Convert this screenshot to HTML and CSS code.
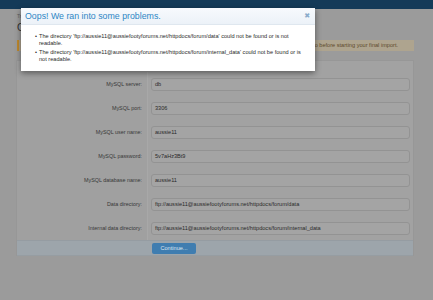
FILE: index.html
```html
<!DOCTYPE html>
<html>
<head>
<meta charset="utf-8">
<link rel="stylesheet" href="styles.css">
</head>
<body>
<div class="topbar"></div>
<div class="page">
  <div class="crumb">Transferring Data to XenForo</div>
  <h1 class="title">Configure Importer</h1>
  <div class="notice">Please review the configuration below and make sure the settings are correct. You need to do so before starting your final import.</div>
  <form class="panel">
    <div class="rows">
      <div class="row"><label class="lbl">MySQL server:</label><div class="field"><div class="input">db</div></div></div>
      <div class="row"><label class="lbl">MySQL port:</label><div class="field"><div class="input">3306</div></div></div>
      <div class="row"><label class="lbl">MySQL user name:</label><div class="field"><div class="input">aussie11</div></div></div>
      <div class="row"><label class="lbl">MySQL password:</label><div class="field"><div class="input">5v7aHz3Bt9</div></div></div>
      <div class="row"><label class="lbl">MySQL database name:</label><div class="field"><div class="input">aussie11</div></div></div>
      <div class="row"><label class="lbl">Data directory:</label><div class="field"><div class="input">ftp://aussie11@aussiefootyforums.net/httpdocs/forum/data</div></div></div>
      <div class="row"><label class="lbl">Internal data directory:</label><div class="field"><div class="input">ftp://aussie11@aussiefootyforums.net/httpdocs/forum/internal_data</div></div></div>
    </div>
    <div class="footer">
      <div class="footer-spacer"></div>
      <div class="footer-btn"><span class="button">Continue...</span></div>
    </div>
  </form>
</div>

<div class="modal">
  <div class="modal-head">
    <span class="modal-title">Oops! We ran into some problems.</span>
    <span class="close">&#10006;</span>
  </div>
  <ul class="errors">
    <li>The directory 'ftp://aussie11@aussiefootyforums.net/httpdocs/forum/data' could not be found or is not readable.</li>
    <li>The directory 'ftp://aussie11@aussiefootyforums.net/httpdocs/forum/internal_data' could not be found or is not readable.</li>
  </ul>
</div>
</body>
</html>
```

FILE: styles.css
```css
html, body {
  margin: 0;
  padding: 0;
}
body {
  background: #9b9b9b;
  font-family: "Liberation Sans", Arial, sans-serif;
  width: 433px;
  height: 300px;
  overflow: hidden;
}
.topbar {
  height: 9px;
  background: #143a58;
}
.page {
  padding: 0 19px 0 16px;
}
.crumb {
  margin-top: 4px;
  height: 6px;
  line-height: 6px;
  font-size: 5px;
  color: #5e5e5e;
  padding-left: 1px;
}
.title {
  margin: 3px 0 6px 1px;
  height: 12px;
  line-height: 12px;
  font-size: 10px;
  font-weight: normal;
  color: #2e2e2e;
}
.notice {
  height: 11px;
  line-height: 11px;
  font-size: 5.6px;
  background: #aea48f;
  border-left: 2px solid #c08a2e;
  color: #5d4a2c;
  padding: 0 16px 0 4px;
  margin-left: 1px;
  white-space: nowrap;
  overflow: hidden;
  text-align: right;
}
.panel {
  margin: 9px 0 0 0;
  background: #a2a2a2;
  border: 1px solid #979797;
  border-bottom: none;
  padding-top: 11px;
}
.rows {
  display: flex;
  flex-direction: column;
}
.row {
  display: grid;
  grid-template-columns: 131px 1fr;
  height: 24px;
}
.lbl {
  background: #a0a0a0;
  border-right: 1px solid #a8a8a8;
  text-align: right;
  padding-right: 5px;
  font-size: 5.4px;
  line-height: 24px;
  color: #383838;
}
.field {
  display: flex;
  align-items: center;
  padding: 0 3px 0 3px;
}
.input {
  flex: 1;
  height: 11px;
  line-height: 11px;
  border: 1px solid #939393;
  border-radius: 3px;
  background: #a4a4a4;
  font-size: 5.6px;
  color: #2a2a2a;
  padding-left: 3px;
  white-space: nowrap;
  overflow: hidden;
}
.footer {
  display: grid;
  grid-template-columns: 132px 1fr;
  height: 14px;
  background: #9da5ab;
  border-top: 1px solid #959ca2;
  border-bottom: 1px solid #969da2;
}
.footer-btn {
  display: flex;
  align-items: center;
  padding-left: 3px;
}
.button {
  display: inline-block;
  width: 44px;
  height: 11px;
  line-height: 11px;
  text-align: center;
  background: #3f7db0;
  border-radius: 2px;
  color: #dbe6f1;
  font-size: 5.6px;
}
.modal {
  position: absolute;
  left: 21px;
  top: 8px;
  width: 294px;
  height: 63px;
  background: #ffffff;
  box-shadow: 0 2px 6px rgba(0, 0, 0, 0.45);
  box-sizing: border-box;
}
.modal-head {
  height: 17px;
  box-sizing: border-box;
  background: linear-gradient(#f7fafd, #ecf2f8);
  border-bottom: 1px solid #dfe7ef;
  display: flex;
  align-items: center;
  justify-content: space-between;
  padding: 0 5px 0 4px;
}
.modal-title {
  font-size: 8.8px;
  color: #2d86c5;
}
.close {
  font-size: 7px;
  font-weight: bold;
  color: #8aaccb;
  font-family: "DejaVu Sans", sans-serif;
}
.errors {
  list-style: none;
  margin: 0;
  padding: 8px 8px 0 14px;
  font-size: 5.6px;
  line-height: 7.4px;
  color: #2a2a2a;
}
.errors li {
  padding-left: 4px;
  text-indent: -4px;
  margin-bottom: 1px;
}
.errors li::before {
  content: "\2022";
  display: inline-block;
  width: 4px;
  text-indent: 0;
}
```
